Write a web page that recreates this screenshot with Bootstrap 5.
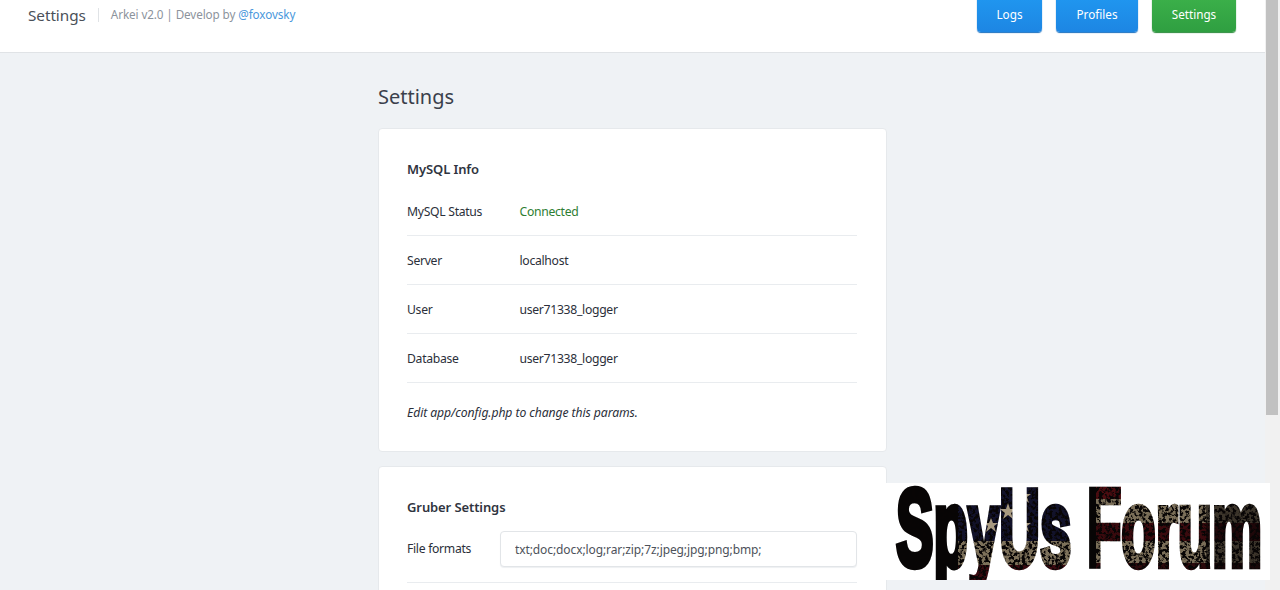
<!DOCTYPE html>
<html lang="en">
<head>
<meta charset="UTF-8">
<meta name="viewport" content="width=device-width, initial-scale=1.0">
<title>Settings</title>
<link href="https://cdn.jsdelivr.net/npm/bootstrap@5.3.0/dist/css/bootstrap.min.css" rel="stylesheet">
<style>
    html, body { height: 590px; overflow: hidden; }
    body { background: #eff2f5; font-family: "Noto Sans", "Open Sans", sans-serif; font-size: 12.2px; letter-spacing: -.3px; color: #2b2f3a; }
    .page-main { width: 1265px; height: 590px; overflow: hidden; flex: none; }
    .top-bar { height: 53px; background: #fff; border-bottom: 1px solid #e0e3e6; padding: 0 29px 0 28px; }
    .top-head { height: 29px; }
    .top-title { font-size: 15.3px; letter-spacing: -.05px; color: #4a4f58; padding-right: 12px; border-right: 1px solid #e0e3e6; line-height: 14px; margin-right: 12px; }
    .top-sub { font-size: 11.7px; letter-spacing: -.1px; color: #8c939c; }
    .top-sub a { color: #4a98dc; text-decoration: none; }
    .top-btn { height: 36px; margin-top: -4px; margin-left: 14px; border: 0; border-radius: 0 0 4px 4px; color: #fff; font-size: 11.7px; letter-spacing: 0; padding: 2px 0 0; }
    .btn-logs { width: 65px; }
    .btn-profiles { width: 82px; }
    .btn-settings { width: 84px; }
    .btn-logs, .btn-profiles { background: linear-gradient(#2097f0, #1d86e3); box-shadow: 0 1px 1px #1a70c0; }
    .btn-settings { background: linear-gradient(#3cb14a, #2f9f41); box-shadow: 0 1px 1px #2a8a3a; }
    .content-col { width: 509px; margin-left: 378px; }
    .page-head { font-size: 20px; letter-spacing: 0; font-weight: 400; color: #3a404b; margin: 32px 0 19px; line-height: 24px; }
    .set-card { background: #fff; border: 1px solid #e6e9ec; border-radius: 4px; padding: 0 29px 0 28px; margin-bottom: 14px; }
    .card-head { font-size: 13px; letter-spacing: -.1px; font-weight: 600; color: #2f3440; line-height: 18px; margin: 31px 0 9px; }
    .info-row { height: 49px; padding-top: 2px; border-bottom: 1px solid #e9ecef; }
    .info-row:first-of-type { height: 48px; }
    .info-label { width: 112.5px; flex: none; }
    .val-ok { color: #2e7d32; }
    .edit-note { font-style: italic; letter-spacing: -.08px; margin: 22px 0 30px; line-height: 16px; }
    .card-head-two { margin-top: 31px; margin-bottom: 15px; }
    .field-row { padding-bottom: 15px; border-bottom: 1px solid #e9ecef; }
    .field-label { width: 93px; flex: none; padding-top: 1px; }
    .field-input { height: 36px; flex: 1; border: 1px solid #e2e5e8; border-radius: 4px; padding: 0 14px; font-size: 12px; letter-spacing: -.1px; color: #4d525a; font-family: inherit; box-shadow: 0 1px 1px #eef0f2; }
    .card-tail { height: 60px; }
    .scroll-side { width: 15px; height: 590px; background: #f1f1f1; padding-left: 1px; flex: none; }
    .scroll-thumb { width: 12px; height: 415px; background: #c1c1c1; }
    .forum-mark { position: absolute; left: 886px; top: 483px; width: 384px; height: 97px; background: #fff; }
    .forum-word { font-family: "Liberation Sans", sans-serif; font-weight: 700; font-size: 110px; letter-spacing: 0; }
</style>
</head>
<body>
<div class="d-flex">
    <div class="page-main">
        <div class="top-bar d-flex align-items-start justify-content-between">
            <div class="top-head d-flex align-items-center">
                <div class="top-title">Settings</div>
                <div class="top-sub">Arkei v2.0 | Develop by <a href="#">@foxovsky</a></div>
            </div>
            <div class="d-flex">
                <button class="btn top-btn btn-logs">Logs</button>
                <button class="btn top-btn btn-profiles">Profiles</button>
                <button class="btn top-btn btn-settings">Settings</button>
            </div>
        </div>
        <div class="content-col">
            <h1 class="page-head">Settings</h1>
            <div class="set-card">
                <div class="card-head">MySQL Info</div>
                <div class="info-row d-flex align-items-center"><div class="info-label">MySQL Status</div><div class="val-ok">Connected</div></div>
                <div class="info-row d-flex align-items-center"><div class="info-label">Server</div><div>localhost</div></div>
                <div class="info-row d-flex align-items-center"><div class="info-label">User</div><div>user71338_logger</div></div>
                <div class="info-row d-flex align-items-center"><div class="info-label">Database</div><div>user71338_logger</div></div>
                <div class="edit-note">Edit app/config.php to change this params.</div>
            </div>
            <div class="set-card">
                <div class="card-head card-head-two">Gruber Settings</div>
                <div class="field-row d-flex align-items-center">
                    <div class="field-label">File formats</div>
                    <input class="field-input" type="text" value="txt;doc;docx;log;rar;zip;7z;jpeg;jpg;png;bmp;">
                </div>
                <div class="card-tail"></div>
            </div>
        </div>
    </div>
    <div class="scroll-side"><div class="scroll-thumb"></div></div>
</div>

<div class="forum-mark">
    <svg width="384" height="97" viewBox="0 0 384 97">
        <defs>
            <filter id="grit" x="0" y="0" width="100%" height="100%" color-interpolation-filters="sRGB">
                <feTurbulence type="fractalNoise" baseFrequency="0.3" numOctaves="3" seed="4"/>
                <feColorMatrix values="0 0 0 0 .03  0 0 0 0 .02  0 0 0 0 .02  0 0 0 -7 3.9"/>
            </filter>
            <mask id="wordmask" maskUnits="userSpaceOnUse" x="0" y="0" width="384" height="97">
                <text class="forum-word" transform="translate(10 83) scale(.512 1)" fill="#fff" stroke="#fff" stroke-width="5" vector-effect="non-scaling-stroke">SpyUs Forum</text>
            </mask>
        </defs>
        <g mask="url(#wordmask)">
            <rect width="384" height="97" fill="#070505"/>
            <!-- flag behind the letters -->
            <rect x="72" y="0" width="120" height="58" fill="#12122a"/>
            <rect x="72" y="58" width="120" height="24" fill="#7d715a"/>
            <rect x="72" y="82" width="120" height="15" fill="#3a0a10"/>
            <rect x="210" y="0" width="174" height="16" fill="#4a0c10"/>
            <rect x="210" y="16" width="174" height="24" fill="#7a6e58"/>
            <rect x="210" y="40" width="174" height="18" fill="#3a0a0e"/>
            <rect x="210" y="58" width="174" height="22" fill="#7a6e58"/>
            <rect x="210" y="80" width="174" height="17" fill="#2c0a0c"/>
            <rect x="320" y="0" width="64" height="97" fill="#070505" opacity=".55"/>
            <rect width="384" height="97" filter="url(#grit)"/>
            <g fill="#a89a80">
                <polygon points="122,20 124,26 130,26 125,30 127,36 122,32 117,36 119,30 114,26 120,26"/>
                <polygon points="138,6 140,11 145,11 141,14 143,20 138,16 133,20 135,14 131,11 136,11"/>
                <polygon points="138,35 140,40 145,40 141,43 143,49 138,45 133,49 135,43 131,40 136,40"/>
                <polygon points="105,35 107,40 112,40 108,43 110,49 105,45 100,49 102,43 98,40 103,40"/>
            </g>
        </g>
    </svg>
</div>

<script src="https://cdn.jsdelivr.net/npm/bootstrap@5.3.0/dist/js/bootstrap.bundle.min.js"></script>
</body>
</html>
